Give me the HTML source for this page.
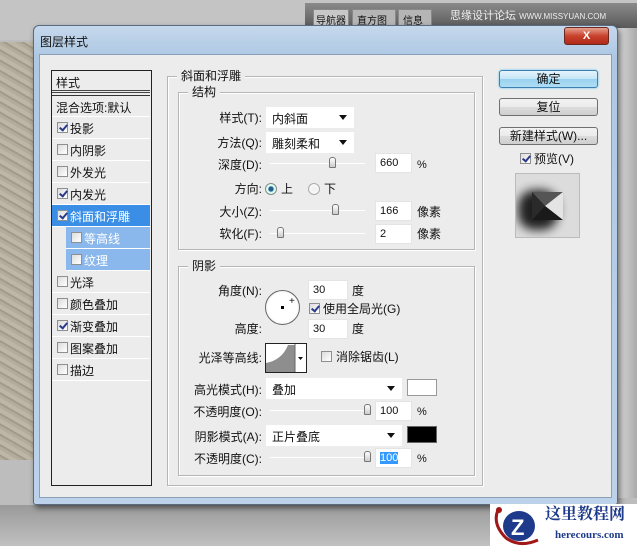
<!DOCTYPE html>
<html><head><meta charset="utf-8"><style>
*{margin:0;padding:0;box-sizing:border-box}
body{width:637px;height:546px;overflow:hidden;position:relative;background:#bdbdbd;font-family:"Liberation Sans","Noto Sans CJK SC",sans-serif;font-size:12px;color:#111}
.a{position:absolute}
.t{position:absolute;white-space:nowrap;font-size:12px;line-height:14px}
.r{text-align:right}
.inp{position:absolute;background:#fff;border:1px solid #e4e4e4;font-size:11px;padding:3px 0 0 4px;height:20px}
.dd{position:absolute;background:#fff;height:21px;padding:3px 0 0 6px;font-size:12px}
.dd:after{content:"";position:absolute;right:7px;top:8px;border:4px solid transparent;border-top:5px solid #111}
.trk{position:absolute;height:1px;background:#aaa;border-bottom:1px solid #fff}
.th{position:absolute;width:7px;height:11px;border:1px solid #777;border-radius:3px 3px 1px 1px;background:linear-gradient(#fff,#ccc)}
.cb{position:absolute;width:11px;height:11px;border:1px solid #8f8f8f;background:linear-gradient(135deg,#ddd,#fff)}
.cb.on:after{content:"";position:absolute;left:3px;top:0;width:3px;height:6px;border:solid #2a3a8a;border-width:0 2px 2px 0;transform:rotate(40deg)}
.row{position:absolute;left:52px;width:98px;height:22px;border-bottom:1px solid #fff;padding:3px 0 0 18px;font-size:12px}
.row .cb{left:5px;top:5px}
.grp{position:absolute;border:1px solid #b5b5b5;box-shadow:1px 1px 0 #fff inset,1px 1px 0 #fff}
.lg{position:absolute;background:#ececec;padding:0 4px;font-size:12px;line-height:14px}
.btn{position:absolute;left:499px;width:99px;height:18px;border:1px solid #707070;border-radius:3px;background:linear-gradient(#f2f2f2,#ebebeb 50%,#dcdcdc 50%,#cfcfcf);text-align:center;font-size:12px;line-height:16px}
</style></head><body>
<div class="a" style="left:0;top:0;width:637px;height:40px;background:#c4c4c4"></div>
<div class="a" style="left:0;top:42px;width:40px;height:418px;background:repeating-linear-gradient(30deg,#b3ab9b 0 3px,#a39b8a 3px 5px,#beb6a6 5px 9px)"></div>
<div class="a" style="left:305px;top:3px;width:332px;height:25px;background:linear-gradient(#8a8a8a,#5a5a5a)"></div>
<div class="a" style="left:313px;top:9px;width:36px;height:18px;background:#c8c8c8;border:1px solid #888;font-size:10px;padding:2px">导航器</div>
<div class="a" style="left:352px;top:9px;width:44px;height:18px;background:#b5b5b5;border:1px solid #888;font-size:10px;padding:2px 4px">直方图</div>
<div class="a" style="left:398px;top:9px;width:34px;height:18px;background:#b5b5b5;border:1px solid #888;font-size:10px;padding:2px 4px">信息</div>
<div class="t" style="left:450px;top:9px;font-size:11px;color:#eee">思缘设计论坛 <span style="font-size:8px">WWW.MISSYUAN.COM</span></div>
<div class="a" style="left:617px;top:28px;width:20px;height:470px;background:linear-gradient(90deg,#ddd,#aaa)"></div>
<div class="a" style="left:0;top:505px;width:637px;height:41px;background:linear-gradient(#9a9a9a,#c0c0c0)"></div>
<div class="a" style="left:33px;top:25px;width:585px;height:480px;border:1px solid #5a6a80;border-radius:6px 6px 3px 3px;background:linear-gradient(#c5d8ec,#aec8e4 30px,#bcd2ea);box-shadow:2px 3px 6px rgba(0,0,0,.5)"></div>
<div class="t" style="left:40px;top:35px;font-size:12px">图层样式</div>
<div class="a" style="left:564px;top:27px;width:45px;height:18px;border:1px solid #6a2a20;border-radius:3px;background:linear-gradient(#e8a090,#c8412c 50%,#b02a18);color:#fff;text-align:center;font-weight:bold;font-size:11px;line-height:16px">X</div>
<div class="a" style="left:39px;top:54px;width:573px;height:444px;background:#ececec;border:1px solid #8aa0b8"></div>
<div class="a" style="left:51px;top:70px;width:101px;height:416px;border:1px solid #222;background:#ececec"></div>
<div class="row" style="top:71px;height:22px;padding-left:4px;border-bottom:3px double #444">样式</div>
<div class="row" style="top:95px;padding-left:4px;border-top:1px solid #333">混合选项:默认</div>
<div class="row" style="top:117px"><span class="cb on"></span>投影</div>
<div class="row" style="top:139px"><span class="cb"></span>内阴影</div>
<div class="row" style="top:161px"><span class="cb"></span>外发光</div>
<div class="row" style="top:183px"><span class="cb on"></span>内发光</div>
<div class="row" style="top:205px;background:#3a8ee6;color:#fff"><span class="cb on"></span>斜面和浮雕</div>
<div class="row" style="top:227px;left:66px;width:84px;background:#8ab8ec;color:#fff"><span class="cb"></span>等高线</div>
<div class="row" style="top:249px;left:66px;width:84px;background:#8ab8ec;color:#fff"><span class="cb"></span>纹理</div>
<div class="row" style="top:271px"><span class="cb"></span>光泽</div>
<div class="row" style="top:293px"><span class="cb"></span>颜色叠加</div>
<div class="row" style="top:315px"><span class="cb on"></span>渐变叠加</div>
<div class="row" style="top:337px"><span class="cb"></span>图案叠加</div>
<div class="row" style="top:359px"><span class="cb"></span>描边</div>
<div class="grp" style="left:167px;top:76px;width:316px;height:410px"></div>
<div class="lg" style="left:177px;top:69px">斜面和浮雕</div>
<div class="grp" style="left:178px;top:92px;width:297px;height:158px"></div>
<div class="lg" style="left:188px;top:85px">结构</div>
<div class="grp" style="left:178px;top:266px;width:297px;height:210px"></div>
<div class="lg" style="left:188px;top:259px">阴影</div>
<div class="t r" style="left:180px;width:82px;top:111px">样式(T):</div>
<div class="dd" style="left:266px;top:107px;width:88px">内斜面</div>
<div class="t r" style="left:180px;width:82px;top:136px">方法(Q):</div>
<div class="dd" style="left:266px;top:132px;width:88px">雕刻柔和</div>
<div class="t r" style="left:180px;width:82px;top:158px">深度(D):</div>
<div class="trk" style="left:270px;top:163px;width:95px"></div><div class="th" style="left:329px;top:157px"></div>
<div class="inp" style="left:375px;top:153px;width:37px">660</div><div class="t" style="left:417px;top:158px;font-size:11px">%</div>
<div class="t r" style="left:180px;width:82px;top:182px">方向:</div>
<div class="a" style="left:265px;top:183px;width:12px;height:12px;border-radius:50%;border:1px solid #888;background:radial-gradient(#2a5a90 30%,#cfe 45%,#fff)"></div>
<div class="t" style="left:281px;top:182px">上</div>
<div class="a" style="left:308px;top:183px;width:12px;height:12px;border-radius:50%;border:1px solid #aaa;background:radial-gradient(#eee,#fff)"></div>
<div class="t" style="left:324px;top:182px">下</div>
<div class="t r" style="left:180px;width:82px;top:205px">大小(Z):</div>
<div class="trk" style="left:270px;top:210px;width:95px"></div><div class="th" style="left:332px;top:204px"></div>
<div class="inp" style="left:375px;top:201px;width:37px">166</div><div class="t" style="left:417px;top:205px">像素</div>
<div class="t r" style="left:180px;width:82px;top:227px">软化(F):</div>
<div class="trk" style="left:270px;top:233px;width:95px"></div><div class="th" style="left:277px;top:227px"></div>
<div class="inp" style="left:375px;top:224px;width:37px">2</div><div class="t" style="left:417px;top:227px">像素</div>
<div class="t r" style="left:180px;width:82px;top:284px">角度(N):</div>
<div class="a" style="left:265px;top:290px;width:35px;height:35px;border-radius:50%;border:1px solid #666;background:radial-gradient(#fff 60%,#ddd)"></div>
<div class="a" style="left:281px;top:306px;width:3px;height:3px;background:#000"></div>
<div class="t" style="left:289px;top:295px;font-size:10px">+</div>
<div class="inp" style="left:308px;top:280px;width:40px">30</div><div class="t" style="left:352px;top:284px">度</div>
<span class="cb on" style="left:309px;top:303px"></span><div class="t" style="left:323px;top:302px">使用全局光(G)</div>
<div class="t r" style="left:180px;width:82px;top:322px">高度:</div>
<div class="inp" style="left:308px;top:319px;width:40px">30</div><div class="t" style="left:352px;top:322px">度</div>
<div class="t r" style="left:180px;width:82px;top:351px">光泽等高线:</div>
<div class="a" style="left:265px;top:343px;width:42px;height:30px;border:1px solid #222;background:#fff;overflow:hidden">
<svg width="40" height="28"><path d="M0 28 L0 19 Q16 16 22 1 L29 1 L29 28Z" fill="#8e8e8e"/><rect x="29" y="0" width="11" height="28" fill="#fff"/><line x1="29" y1="0" x2="29" y2="28" stroke="#666"/><path d="M32 13 l5 0 l-2.5 3z" fill="#111"/></svg></div>
<span class="cb" style="left:321px;top:351px"></span><div class="t" style="left:336px;top:350px">消除锯齿(L)</div>
<div class="t r" style="left:180px;width:82px;top:383px">高光模式(H):</div>
<div class="dd" style="left:266px;top:378px;width:136px">叠加</div>
<div class="a" style="left:407px;top:379px;width:30px;height:17px;background:#fff;border:1px solid #999"></div>
<div class="t r" style="left:180px;width:82px;top:405px">不透明度(O):</div>
<div class="trk" style="left:270px;top:410px;width:100px"></div><div class="th" style="left:364px;top:404px"></div>
<div class="inp" style="left:375px;top:401px;width:37px">100</div><div class="t" style="left:417px;top:405px;font-size:11px">%</div>
<div class="t r" style="left:180px;width:82px;top:430px">阴影模式(A):</div>
<div class="dd" style="left:266px;top:425px;width:136px">正片叠底</div>
<div class="a" style="left:407px;top:426px;width:30px;height:17px;background:#000;border:1px solid #666"></div>
<div class="t r" style="left:180px;width:82px;top:452px">不透明度(C):</div>
<div class="trk" style="left:270px;top:457px;width:100px"></div><div class="th" style="left:364px;top:451px"></div>
<div class="inp" style="left:375px;top:448px;width:37px"><span style="background:#3399ff;color:#fff">100</span></div><div class="t" style="left:417px;top:452px;font-size:11px">%</div>
<div class="btn" style="top:70px;border-color:#3c7fb1;background:linear-gradient(#e5f4fc,#c4e5f6 50%,#98d1ef 50%,#b0ddf3);box-shadow:0 0 2px #5bc0f0">确定</div>
<div class="btn" style="top:98px">复位</div>
<div class="btn" style="top:127px">新建样式(W)...</div>
<span class="cb on" style="left:520px;top:153px"></span><div class="t" style="left:534px;top:152px">预览(V)</div>
<div class="a" style="left:515px;top:173px;width:65px;height:65px;background:#dcdcdc;border:1px solid #bbb;overflow:hidden">
<div class="a" style="left:2px;top:16px;width:40px;height:40px;border-radius:40%;background:#000;filter:blur(5px);opacity:.85"></div>
<svg class="a" style="left:16px;top:18px" width="31" height="28"><polygon points="0,0 31,0 13,14" fill="#555"/><polygon points="31,0 31,28 13,14" fill="#e4e4e4"/><polygon points="0,28 31,28 13,14" fill="#1a1a1a"/><polygon points="0,0 0,28 13,14" fill="#2a2a2a"/></svg>
</div>
<div class="a" style="left:490px;top:504px;width:147px;height:42px;background:#fff"></div>
<svg class="a" style="left:490px;top:504px" width="60" height="42"><ellipse cx="29" cy="22" rx="16" ry="15" fill="#1e3a8a"/><text x="21" y="31" font-size="22" font-weight="bold" fill="#fff" font-family="Liberation Sans">Z</text><path d="M8 6 Q2 20 16 34 Q30 44 48 36" stroke="#a01818" stroke-width="3" fill="none"/><circle cx="9" cy="6" r="3" fill="#a01818"/></svg>
<div class="t" style="left:545px;top:508px;font-size:16px;font-weight:bold;color:#1e3a8a;font-family:'Liberation Serif','Noto Serif CJK SC',serif">这里教程网</div>
<div class="t" style="left:555px;top:528px;font-size:11px;font-weight:bold;color:#1e3a8a;font-family:'Liberation Serif',serif">herecours.com</div>
</body></html>
